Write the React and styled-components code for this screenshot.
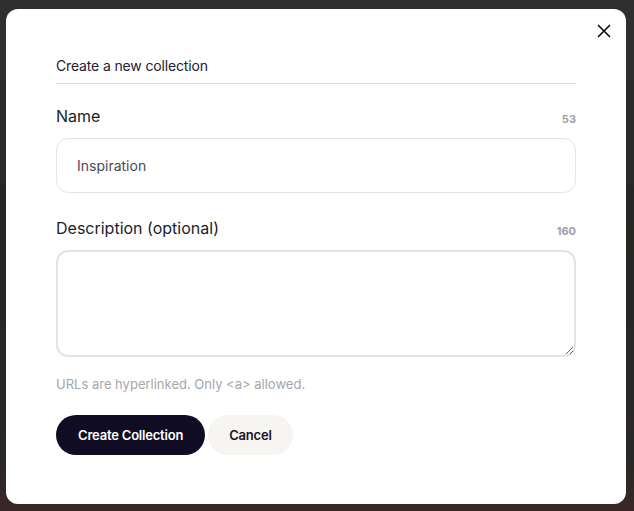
import React, { useState } from 'react';
import styled, { createGlobalStyle } from 'styled-components';

const GlobalStyle = createGlobalStyle`
  html, body {
    margin: 0;
    padding: 0;
    height: 100%;
  }
  body {
    background: #2c2c2c;
    font-family: Inter, "Noto Sans", sans-serif;
    -webkit-font-smoothing: antialiased;
  }
  * { box-sizing: border-box; }
`;

const Backdrop = styled.div`
  width: 634px;
  height: 511px;
  padding: 9px 8px 7px 6px;
  background: linear-gradient(
    to bottom,
    #2f2f2f 0,
    #2f2f2f 80px,
    #2a2a2a 80px,
    #2a2a2a 185px,
    #262625 185px,
    #2a2828 460px,
    #3a2626 100%
  );
`;

const Modal = styled.div`
  position: relative;
  width: 620px;
  height: 495px;
  background: #fff;
  border-radius: 12px;
  padding: 47px 50px 0 50px;
  display: flex;
  flex-direction: column;
`;

const CloseButton = styled.button`
  position: absolute;
  top: 7px;
  right: 7px;
  width: 30px;
  height: 30px;
  border: none;
  background: transparent;
  padding: 0;
  display: flex;
  align-items: center;
  justify-content: center;
  cursor: pointer;
  color: #111;
`;

const Heading = styled.h2`
  margin: 0;
  font-size: 14px;
  font-weight: 400;
  letter-spacing: -0.15px;
  color: #23222e;
  padding-bottom: 7px;
  border-bottom: 1px solid #dcdcdc;
  line-height: 20px;
`;

const Field = styled.div`
  display: flex;
  flex-direction: column;
  margin-top: ${(p) => p.$top}px;
`;

const LabelRow = styled.div`
  display: flex;
  justify-content: space-between;
  align-items: flex-end;
  height: 22px;
  margin-bottom: 11px;
`;

const Label = styled.label`
  font-size: 16px;
  color: #1c1b29;
  line-height: 22px;
`;

const Counter = styled.span`
  font-size: 11px;
  font-weight: 700;
  color: #9e9ea6;
  line-height: 16px;
`;

const TextInput = styled.input`
  width: 100%;
  height: 55px;
  border: 1px solid #e5e5e5;
  border-radius: 12px;
  padding: 0 20px;
  font-family: inherit;
  font-size: 14px;
  color: #4a4a52;
  outline: none;
`;

const TextArea = styled.textarea`
  display: block;
  width: 100%;
  height: 107px;
  border: 2px solid #e3e3e3;
  border-radius: 12px;
  padding: 14px 20px;
  font-family: inherit;
  font-size: 14px;
  color: #4a4a52;
  outline: none;
  resize: vertical;
`;

const Hint = styled.p`
  margin: 18px 0 0;
  font-size: 13px;
  color: #a6a6ad;
  line-height: 18px;
`;

const Actions = styled.div`
  display: flex;
  gap: 3px;
  margin-top: 22px;
`;

const Button = styled.button`
  height: 40px;
  padding: 0 ${(p) => (p.$primary ? 22 : 21)}px;
  border: none;
  border-radius: 20px;
  font-family: inherit;
  font-size: 13px;
  font-weight: 600;
  letter-spacing: -0.2px;
  cursor: pointer;
  background: ${(p) => (p.$primary ? '#0f0c24' : '#f6f5f1')};
  color: ${(p) => (p.$primary ? '#fff' : '#15132a')};
`;

export default function App() {
  const [name, setName] = useState('Inspiration');
  const [desc, setDesc] = useState('');

  return (
    <>
      <GlobalStyle />
      <Backdrop>
        <Modal>
          <CloseButton aria-label="Close">
            <svg width="14" height="14" viewBox="0 0 14 14" fill="none">
              <path d="M1 1L13 13M13 1L1 13" stroke="currentColor" strokeWidth="1.7" />
            </svg>
          </CloseButton>
          <Heading>Create a new collection</Heading>
          <Field $top={21}>
            <LabelRow>
              <Label>Name</Label>
              <Counter>{64 - name.length}</Counter>
            </LabelRow>
            <TextInput value={name} onChange={(e) => setName(e.target.value)} />
          </Field>
          <Field $top={24}>
            <LabelRow>
              <Label>Description (optional)</Label>
              <Counter>{160 - desc.length}</Counter>
            </LabelRow>
            <TextArea value={desc} onChange={(e) => setDesc(e.target.value)} />
          </Field>
          <Hint>URLs are hyperlinked. Only &lt;a&gt; allowed.</Hint>
          <Actions>
            <Button $primary>Create Collection</Button>
            <Button>Cancel</Button>
          </Actions>
        </Modal>
      </Backdrop>
    </>
  );
}
